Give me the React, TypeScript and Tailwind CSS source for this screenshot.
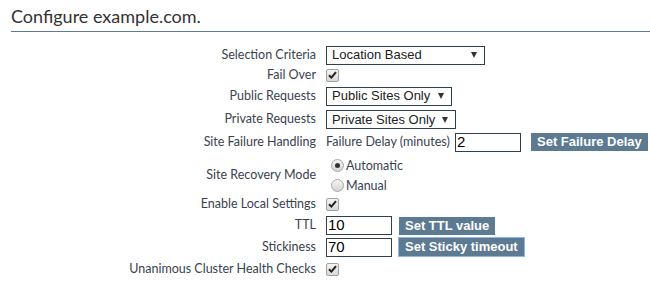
import React from "react";

const label = "font-['Lato',sans-serif] text-[12.5px] text-[#3a4250]";
const ctrl = "font-['Liberation_Sans',Arial,sans-serif]";

function Check() {
  return (
    <span className="inline-flex h-[13px] w-[13px] items-center justify-center rounded-[2px] border border-[#a0a0a0] bg-gradient-to-b from-[#f4f4f4] to-[#d8d8d8]">
      <svg width="9" height="8" viewBox="0 0 9 8">
        <path d="M1 4.2 L3.4 6.6 L8 1.2" fill="none" stroke="#222" strokeWidth="2" />
      </svg>
    </span>
  );
}

function Radio({ on }: { on?: boolean }) {
  return (
    <span className="inline-flex h-[13px] w-[13px] items-center justify-center rounded-full border border-[#a8a8a8] bg-gradient-to-b from-[#f6f6f6] to-[#d4d4d4]">
      {on && <span className="h-[5px] w-[5px] rounded-full bg-[#333]" />}
    </span>
  );
}

function Select({ text, w }: { text: string; w: string }) {
  return (
    <div className={`${ctrl} ${w} flex h-[19px] items-center justify-between whitespace-nowrap border border-[#2e3f50] bg-white pl-[5px] pr-[7px] text-[13px] text-[#222]`}>
      <span>{text}</span>
      <svg width="6" height="6" viewBox="0 0 6 6">
        <path d="M0 0 H6 L3 6 Z" fill="#333" />
      </svg>
    </div>
  );
}

function Field({ value, w }: { value: string; w: string }) {
  return (
    <div className={`${ctrl} ${w} flex h-[19px] items-center border border-[#2e3f50] bg-white pl-[1px] text-[15px] text-black`}>
      {value}
    </div>
  );
}

function Btn({ text, focus }: { text: string; focus?: boolean }) {
  return (
    <button
      className={`${ctrl} flex h-[18px] items-center whitespace-nowrap bg-[#5c7a92] px-[6px] text-[13px] font-bold text-white ${focus ? "outline outline-1 outline-[#8fb4ef]" : ""}`}
    >
      {text}
    </button>
  );
}

function Row({ name, h, children }: { name: string; h: string; children: React.ReactNode }) {
  return (
    <div className={`grid grid-cols-[316px_1fr] gap-x-[10px] ${h}`}>
      <div className={`${label} flex items-center justify-end whitespace-nowrap`}>{name}</div>
      <div className="flex items-center">{children}</div>
    </div>
  );
}

export default function App() {
  return (
    <div className="h-[281px] w-[650px] overflow-hidden bg-white pl-[11px]">
      <h1 className="pt-[5px] font-['Lato',sans-serif] text-[18px] leading-[22px] text-[#333]">
        Configure example.com.
      </h1>
      <div className="mt-[4px] h-px bg-[#5b7b99]" />
      <div className="-ml-[11px] mt-[12px]">
        <Row name="Selection Criteria" h="h-[22px]">
          <Select text="Location Based" w="w-[159px]" />
        </Row>
        <Row name="Fail Over" h="h-[16px]">
          <Check />
        </Row>
        <Row name="Public Requests" h="h-[28px]">
          <Select text="Public Sites Only" w="w-[126px]" />
        </Row>
        <Row name="Private Requests" h="h-[16px]">
          <Select text="Private Sites Only" w="w-[130px]" />
        </Row>
        <Row name="Site Failure Handling" h="h-[32px]">
          <span className={`${label} w-[129px] whitespace-nowrap`}>Failure Delay (minutes)</span>
          <Field value="2" w="w-[66px]" />
          <span className="w-[10px]" />
          <Btn text="Set Failure Delay" />
        </Row>
        <Row name="Site Recovery Mode" h="h-[34px]">
          <div className="flex flex-col gap-[7px] pl-[5px]">
            <label className={`${label} flex items-center gap-[2px] leading-[13px]`}>
              <Radio on />
              Automatic
            </label>
            <label className={`${label} flex items-center gap-[2px] leading-[13px]`}>
              <Radio />
              Manual
            </label>
          </div>
        </Row>
        <Row name="Enable Local Settings" h="h-[24px]">
          <Check />
        </Row>
        <Row name="TTL" h="h-[18px]">
          <Field value="10" w="w-[66px]" />
          <span className="w-[7px]" />
          <Btn text="Set TTL value" />
        </Row>
        <Row name="Stickiness" h="h-[26px]">
          <Field value="70" w="w-[66px]" />
          <span className="w-[7px]" />
          <Btn text="Set Sticky timeout" focus />
        </Row>
        <Row name="Unanimous Cluster Health Checks" h="h-[18px]">
          <Check />
        </Row>
      </div>
    </div>
  );
}
